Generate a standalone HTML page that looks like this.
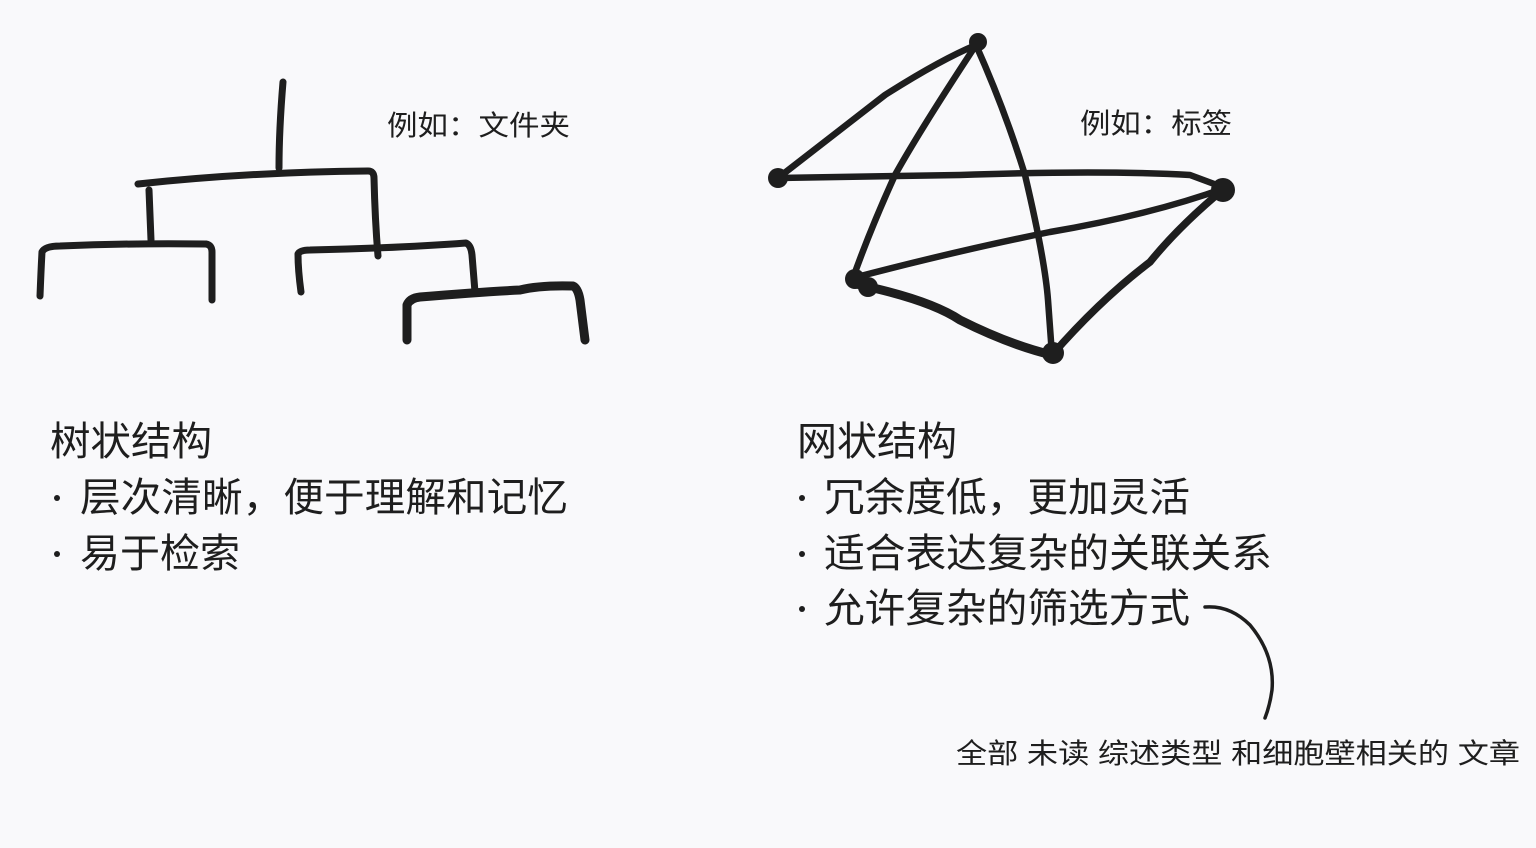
<!DOCTYPE html>
<html><head><meta charset="utf-8"><style>
html,body{margin:0;padding:0;background:#f9f9fb;}
svg{display:block}
text{font-family:"Liberation Sans","Noto Sans CJK SC",sans-serif;fill:#1e1e1e}
</style></head><body>
<svg width="1536" height="848" viewBox="0 0 1536 848" xmlns="http://www.w3.org/2000/svg">
<rect width="1536" height="848" fill="#f9f9fb"/>
<g fill="none" stroke="#1e1e1e" stroke-linecap="round" stroke-linejoin="round">
 <g stroke-width="7">
  <path d="M283 82 Q279 130 279 168"/>
  <path d="M138 184 Q250 172 368 171 Q374 171 374 178 Q375 220 378 256"/>
  <path d="M149 190 Q150 215 151 240"/>
  <path d="M40 296 Q41 270 42 252 Q45 246 60 246 Q130 243 206 244 Q212 245 212 252 L212 300"/>
  <path d="M301 292 Q298 270 298 254 Q300 250 310 250 Q400 248 466 243 Q471 245 472 255 L475 292"/>
  <path d="M407 340 L407 305 Q410 298 420 297 Q480 292 520 290 Q540 285 573 286 Q578 288 580 300 L585 340" stroke-width="9"/>
 </g>
 <g stroke-width="6.5">
  <path d="M778 178 Q840 130 885 95 Q940 60 976 45"/>
  <path d="M778 178 Q900 176 960 175 Q1100 170 1190 175 L1225 188"/>
  <path d="M976 45 Q920 130 895 175 Q870 230 853 278"/>
  <path d="M976 45 Q1005 110 1025 175 Q1045 260 1048 300 L1052 355" />
  <path d="M853 278 Q960 250 1050 232 Q1150 215 1225 188"/>
  <path d="M860 285 Q930 300 960 320 Q1010 345 1052 355" stroke-width="9"/>
  <path d="M1052 355 Q1100 300 1150 262 Q1180 225 1225 188" stroke-width="7.5"/>
 </g>
 <g fill="#1e1e1e" stroke="none">
  <circle cx="978" cy="42" r="9"/>
  <circle cx="778" cy="178" r="10"/>
  <circle cx="1223" cy="190" r="12"/>
  <circle cx="855" cy="279" r="10"/>
  <circle cx="868" cy="287" r="10"/>
  <circle cx="1053" cy="353" r="11"/>
 </g>
 <path d="M1205 607 Q1230 605 1250 625 Q1275 655 1272 690 Q1270 705 1265 718" stroke-width="3.5"/>
</g>
<g fill="#1e1e1e">
 <circle cx="57" cy="498" r="3"/>
 <circle cx="57" cy="554" r="3"/>
 <circle cx="802" cy="498" r="3"/>
 <circle cx="802" cy="554" r="3"/>
 <circle cx="802" cy="609" r="3"/>
</g>
<text x="387" y="135" font-size="28" fill="#333" textLength="183" lengthAdjust="spacingAndGlyphs">例如：文件夹</text>
<text x="1080" y="133" font-size="28" fill="#333" textLength="152" lengthAdjust="spacingAndGlyphs">例如：标签</text>
<text x="50" y="455" font-size="40" textLength="162" lengthAdjust="spacingAndGlyphs">树状结构</text>
<text x="80" y="511" font-size="40" textLength="488" lengthAdjust="spacingAndGlyphs">层次清晰，便于理解和记忆</text>
<text x="80" y="567" font-size="40" textLength="160" lengthAdjust="spacingAndGlyphs">易于检索</text>
<text x="797" y="455" font-size="40" textLength="160" lengthAdjust="spacingAndGlyphs">网状结构</text>
<text x="824" y="511" font-size="40" textLength="366" lengthAdjust="spacingAndGlyphs">冗余度低，更加灵活</text>
<text x="824" y="567" font-size="40" textLength="448" lengthAdjust="spacingAndGlyphs">适合表达复杂的关联关系</text>
<text x="824" y="622" font-size="40" textLength="366" lengthAdjust="spacingAndGlyphs">允许复杂的筛选方式</text>
<text x="956" y="763" font-size="28" fill="#333" textLength="564" lengthAdjust="spacingAndGlyphs">全部 未读 综述类型 和细胞壁相关的 文章</text>
</svg>
</body></html>
